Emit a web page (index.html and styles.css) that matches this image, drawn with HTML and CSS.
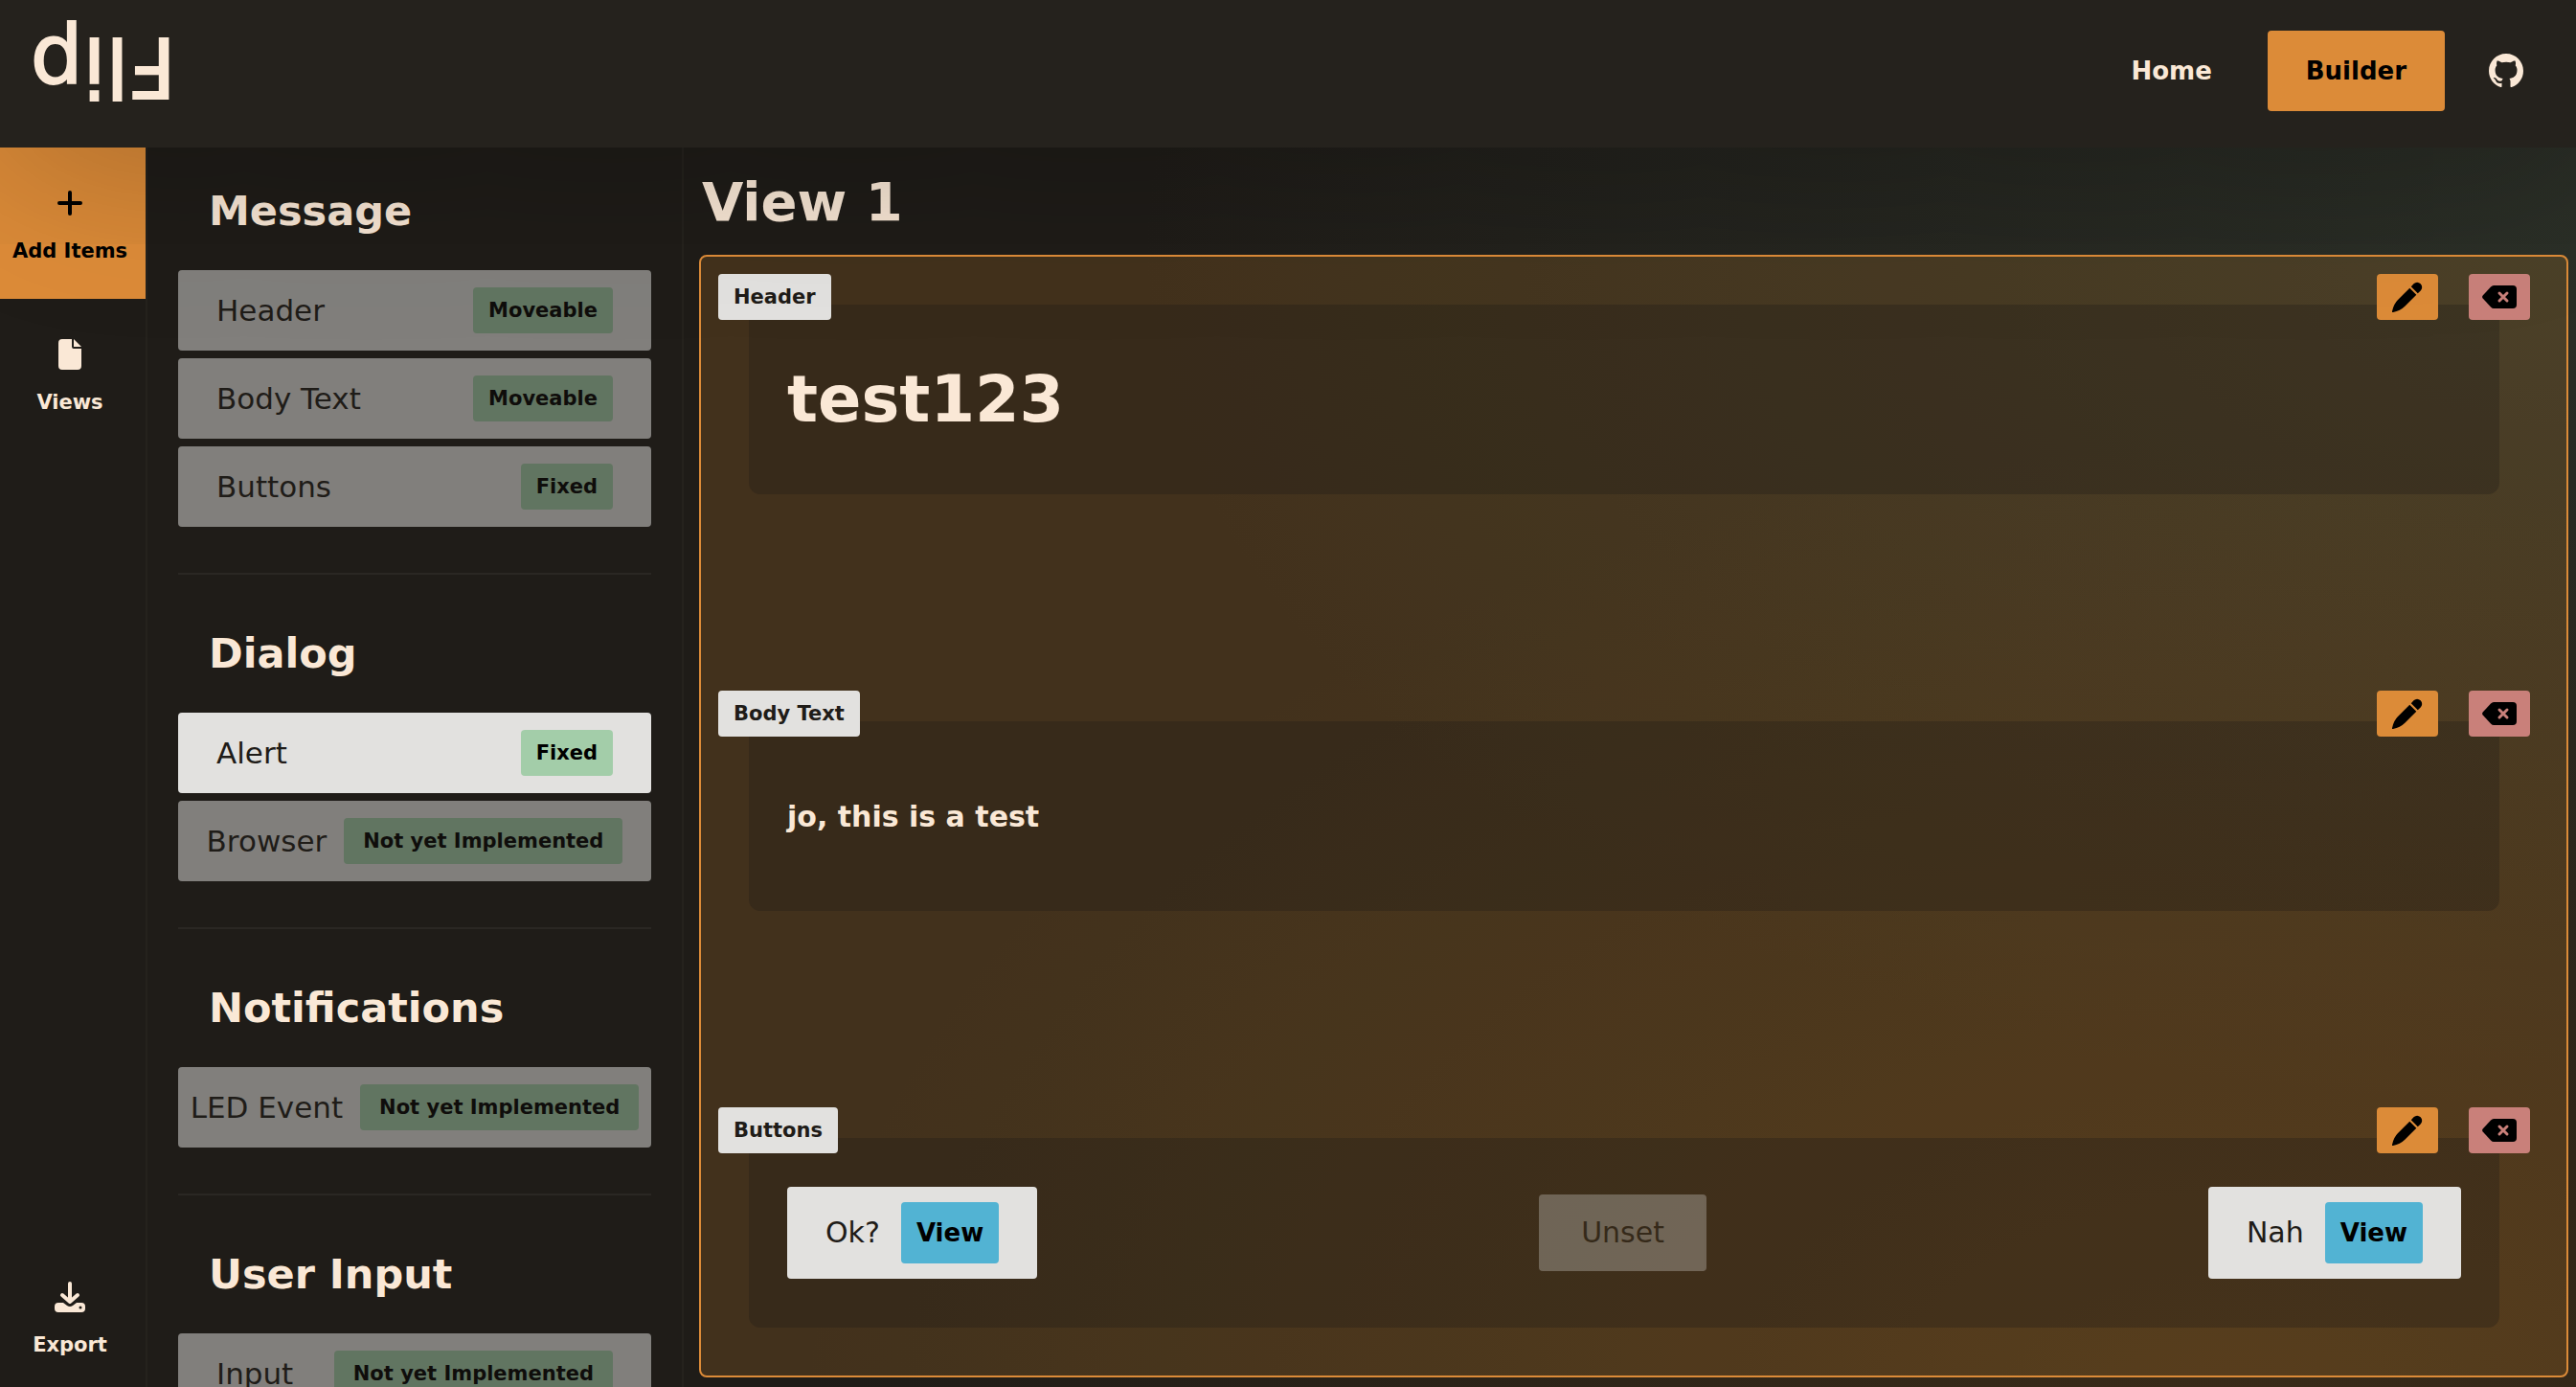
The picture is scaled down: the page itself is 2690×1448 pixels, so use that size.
FILE: index.html
```html
<!DOCTYPE html>
<html lang="en">
<head>
<meta charset="utf-8">
<title>Flip Builder</title>
<link rel="stylesheet" href="styles.css">
</head>
<body>
<svg class="sprite" aria-hidden="true">
  <symbol id="pencil" viewBox="0 0 32 32">
    <path d="M18.300 6.700 25.300 13.700 13 26Q8.500 30.500 1 32H0V31Q1.500 23.500 6 19ZM19.800 5.200 22.500 2.300A5.600 5.600 0 0 1 29.700 2.300A5.600 5.600 0 0 1 29.700 9.500L26.800 12.200Z"/>
  </symbol>
  <symbol id="backspace" viewBox="0 0 36 24">
    <path fill-rule="evenodd" d="M12 0H32A4 4 0 0 1 36 4V20A4 4 0 0 1 32 24H12Q10.500 24 9 22.500L.7 13.500Q-.5 12 .7 10.500L9 1.500Q10.500 0 12 0Z"/>
    <path class="cross" d="M18 8 26 16M26 8 18 16"/>
  </symbol>
</svg>

<header class="topbar">
  <a class="logo" href="#">Flip</a>
  <nav class="nav">
    <a class="nav-link" href="#">Home</a>
    <a class="nav-link nav-link--active" href="#">Builder</a>
    <a class="nav-icon" href="#" aria-label="GitHub">
      <svg width="36" height="36" viewBox="0 0 16 16"><path d="M8 0C3.580 0 0 3.580 0 8c0 3.540 2.290 6.530 5.470 7.590.4.070.55-.17.55-.38 0-.19-.01-.82-.01-1.490-2.010.37-2.530-.49-2.690-.94-.09-.23-.48-.94-.82-1.130-.28-.15-.68-.52-.01-.53.63-.01 1.080.58 1.230.82.72 1.210 1.870.87 2.330.66.07-.52.28-.87.51-1.070-1.780-.2-3.640-.89-3.640-3.950 0-.87.31-1.590.82-2.150-.08-.2-.36-1.020.08-2.120 0 0 .67-.21 2.200.82.64-.18 1.320-.27 2-.27s1.360.09 2 .27c1.530-1.040 2.200-.82 2.200-.82.44 1.100.16 1.920.08 2.120.51.56.82 1.270.82 2.150 0 3.070-1.870 3.750-3.650 3.950.29.25.54.73.54 1.480 0 1.070-.01 1.930-.01 2.200 0 .21.15.46.55.38A8.010 8.010 0 0 0 16 8c0-4.420-3.580-8-8-8Z"/></svg>
    </a>
  </nav>
</header>

<div class="workspace">
  <aside class="rail">
    <button class="rail-item rail-item--active">
      <svg width="26" height="32" viewBox="0 0 26 32"><path class="line" d="M13 5V27M2 16H24"/></svg>
      <span>Add Items</span>
    </button>
    <button class="rail-item">
      <svg width="24" height="32" viewBox="0 0 24 32"><path d="M4 0H14V8Q14 10 16 10H24V28A4 4 0 0 1 20 32H4A4 4 0 0 1 0 28V4A4 4 0 0 1 4 0ZM16 0 24 8H16Z"/></svg>
      <span>Views</span>
    </button>
    <button class="rail-item rail-item--last">
      <svg width="32" height="32" viewBox="0 0 32 32"><path class="line" d="M16 2V20M8 14 16 21 24 14"/><path fill-rule="evenodd" d="M4 22H9L13 25Q16 27 19 25L23 22H28A4 4 0 0 1 32 26V28A4 4 0 0 1 28 32H4A4 4 0 0 1 0 28V26A4 4 0 0 1 4 22ZM27 25.500A1.500 1.500 0 0 0 27 28.500A1.500 1.500 0 0 0 27 25.500Z"/></svg>
      <span>Export</span>
    </button>
  </aside>

  <aside class="panel">
    <section class="group">
      <h2>Message</h2>
      <button class="item" disabled>Header<span class="badge">Moveable</span></button>
      <button class="item" disabled>Body Text<span class="badge">Moveable</span></button>
      <button class="item" disabled>Buttons<span class="badge">Fixed</span></button>
    </section>
    <section class="group">
      <h2>Dialog</h2>
      <button class="item">Alert<span class="badge">Fixed</span></button>
      <button class="item item--wide" disabled>Browser<span class="badge badge--long">Not yet Implemented</span></button>
    </section>
    <section class="group">
      <h2>Notifications</h2>
      <button class="item item--wide" disabled>LED Event<span class="badge badge--long">Not yet Implemented</span></button>
    </section>
    <section class="group">
      <h2>User Input</h2>
      <button class="item" disabled>Input<span class="badge badge--long">Not yet Implemented</span></button>
    </section>
  </aside>

  <main class="main">
    <h1>View 1</h1>
    <div class="canvas">
      <section class="block">
        <div class="block-bar">
          <span class="tag">Header</span>
          <button class="tool" aria-label="Edit header"><svg width="32" height="32"><use href="#pencil"/></svg></button>
          <button class="tool tool--delete" aria-label="Delete header"><svg width="36" height="24"><use href="#backspace"/></svg></button>
        </div>
        <div class="card"><span class="headline">test123</span></div>
      </section>
      <section class="block">
        <div class="block-bar">
          <span class="tag">Body Text</span>
          <button class="tool" aria-label="Edit body text"><svg width="32" height="32"><use href="#pencil"/></svg></button>
          <button class="tool tool--delete" aria-label="Delete body text"><svg width="36" height="24"><use href="#backspace"/></svg></button>
        </div>
        <div class="card"><p class="copy">jo, this is a test</p></div>
      </section>
      <section class="block">
        <div class="block-bar">
          <span class="tag">Buttons</span>
          <button class="tool" aria-label="Edit buttons"><svg width="32" height="32"><use href="#pencil"/></svg></button>
          <button class="tool tool--delete" aria-label="Delete buttons"><svg width="36" height="24"><use href="#backspace"/></svg></button>
        </div>
        <div class="card">
          <button class="choice">Ok?<span class="target">View</span></button>
          <button class="choice choice--unset" disabled>Unset</button>
          <button class="choice">Nah<span class="target">View</span></button>
        </div>
      </section>
    </div>
  </main>
</div>
</body>
</html>
```
FILE: styles.css
```css
:root {
  --dark: #1f1c18;
  --bar: #25221d;
  --cream: #fae8d6;
  --orange: #dc8b38;
  --light: #e2e1df;
  --green: #a3cda9;
  --red: #c9807a;
  --blue: #52b3d3;
}

* { box-sizing: border-box; }

body {
  display: flex;
  flex-direction: column;
  height: 100vh;
  margin: 0;
  overflow: hidden;
  background: var(--dark);
  color: var(--cream);
  font-family: "DejaVu Sans", sans-serif;
}

a { color: inherit; text-decoration: none; }

button {
  margin: 0;
  padding: 0;
  border: 0;
  background: none;
  color: inherit;
  font: inherit;
}

svg { display: block; fill: currentColor; }

.sprite { position: absolute; width: 0; height: 0; }

.line {
  fill: none;
  stroke: currentColor;
  stroke-width: 4;
  stroke-linecap: round;
  stroke-linejoin: round;
}

.cross {
  fill: none;
  stroke: var(--red);
  stroke-width: 3;
  stroke-linecap: round;
}

.topbar {
  position: relative;
  z-index: 1;
  display: flex;
  flex: none;
  align-items: flex-start;
  justify-content: space-between;
  padding: 21px 27px 35px 32px;
  background: var(--bar);
  box-shadow: 0 0 200px rgba(0, 0, 0, .32);
}

.logo {
  font-size: 86px;
  line-height: 98px;
  -webkit-text-stroke: 2px var(--cream);
  transform: rotate(180deg);
}

.nav { display: flex; align-items: center; gap: 18px; margin-top: 11px; }

.nav-link {
  padding: 0 40px;
  border-radius: 4px;
  font-size: 26px;
  font-weight: bold;
  line-height: 84px;
}

.nav-link--active { background: var(--orange); color: #000; }

.nav-icon { padding: 0 28px; }

.workspace { display: flex; flex: 1; min-height: 0; }

.rail {
  display: flex;
  flex: none;
  flex-direction: column;
  width: 154px;
  border-right: 2px solid var(--bar);
}

.rail-item {
  display: flex;
  flex-direction: column;
  align-items: center;
  gap: 22px;
  padding: 42px 6px 38px 0;
  font-size: 21px;
  font-weight: bold;
  line-height: 24px;
  white-space: nowrap;
}

.rail-item--active { background: var(--orange); color: #000; }

.rail-item--last { margin-top: auto; padding-bottom: 32px; }

.panel {
  flex: none;
  width: 560px;
  padding: 0 32px;
  overflow: hidden;
  border-right: 2px solid var(--bar);
}

.group {
  display: flex;
  flex-direction: column;
  gap: 8px;
  padding: 58px 0 48px;
  border-bottom: 2px solid #2a2723;
}

.group:first-child { padding-top: 42px; }

.group h2 {
  margin: 0 34px 30px 32px;
  font-size: 43px;
  line-height: 48px;
}

.item {
  display: flex;
  align-items: center;
  justify-content: space-between;
  gap: 18px;
  height: 84px;
  padding: 0 40px;
  border-radius: 4px;
  background: var(--light);
  color: var(--dark);
  font-size: 31px;
  white-space: nowrap;
}

.item:disabled { opacity: .5; }

.item--wide { justify-content: center; padding: 0; }

.badge {
  padding: 0 16px;
  border-radius: 4px;
  background: var(--green);
  color: #000;
  font-size: 21px;
  font-weight: bold;
  line-height: 48px;
}

.badge--long { padding: 0 20px; }

.main {
  display: flex;
  flex: 1;
  flex-direction: column;
  min-width: 0;
  padding: 25px 8px 10px 16px;
  background:
    radial-gradient(ellipse 1500px 1050px at 82% 105%, rgba(98, 66, 26, .42), transparent),
    radial-gradient(ellipse 1500px 900px at 100% 8%, rgba(62, 78, 64, .38), transparent);
}

h1 {
  margin: 0 0 23px 3px;
  font-size: 56px;
  line-height: 64px;
}

.canvas {
  display: flex;
  flex: 1;
  flex-direction: column;
  justify-content: space-between;
  padding: 18px 38px 50px 18px;
  border: 2px solid var(--orange);
  border-radius: 8px;
  background: rgba(220, 143, 50, .19);
}

.block-bar {
  position: relative;
  display: flex;
  gap: 32px;
  margin-bottom: -16px;
}

.tag {
  margin-right: auto;
  padding: 0 16px;
  border-radius: 4px;
  background: var(--light);
  color: var(--dark);
  font-size: 21px;
  font-weight: bold;
  line-height: 48px;
}

.tool {
  display: grid;
  place-items: center;
  width: 64px;
  height: 48px;
  border-radius: 4px;
  background: var(--orange);
  color: #000;
}

.tool--delete { background: var(--red); }

.card {
  display: flex;
  align-items: center;
  justify-content: space-between;
  min-height: 198px;
  margin: 0 32px;
  padding: 0 40px;
  border-radius: 12px;
  background: rgba(31, 28, 24, .3);
}

.headline { font-size: 67px; font-weight: bold; }

.copy { margin: 0; font-size: 30px; font-weight: bold; }

.choice {
  display: flex;
  align-items: center;
  gap: 22px;
  padding: 16px 40px;
  border-radius: 4px;
  background: var(--light);
  color: var(--dark);
  font-size: 30px;
  line-height: 48px;
}

.choice--unset { padding: 16px 44px; opacity: .3; }

.target {
  padding: 0 16px;
  border-radius: 4px;
  background: var(--blue);
  color: #000;
  font-size: 26px;
  font-weight: bold;
  line-height: 64px;
}
```
